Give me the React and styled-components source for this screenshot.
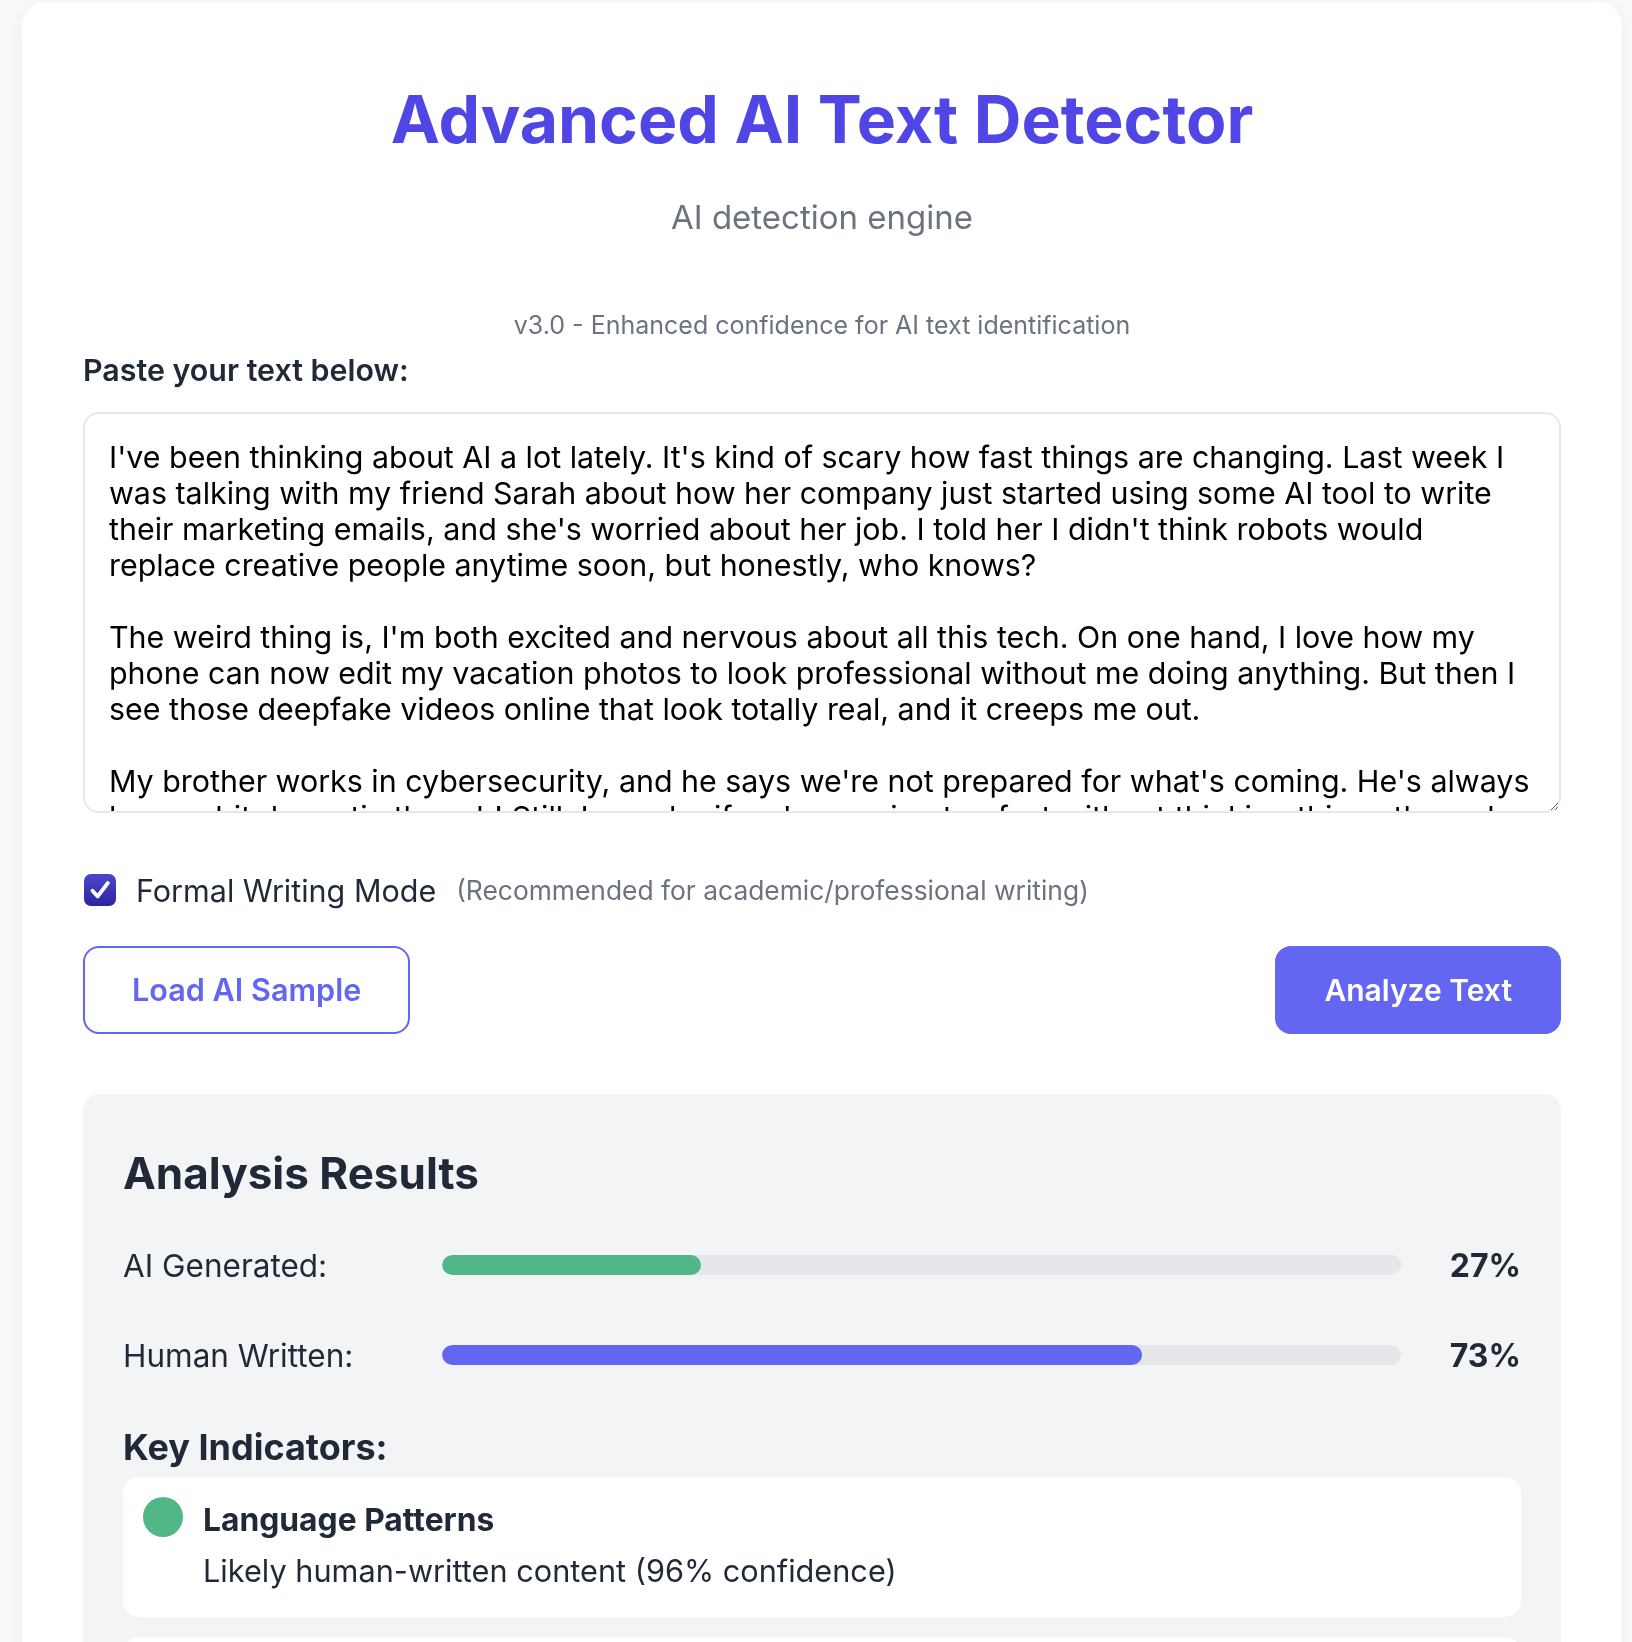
import React, { useState } from 'react';
import styled, { createGlobalStyle } from 'styled-components';

const SAMPLE = `I've been thinking about AI a lot lately. It's kind of scary how fast things are changing. Last week I was talking with my friend Sarah about how her company just started using some AI tool to write their marketing emails, and she's worried about her job. I told her I didn't think robots would replace creative people anytime soon, but honestly, who knows?

The weird thing is, I'm both excited and nervous about all this tech. On one hand, I love how my phone can now edit my vacation photos to look professional without me doing anything. But then I see those deepfake videos online that look totally real, and it creeps me out.

My brother works in cybersecurity, and he says we're not prepared for what's coming. He's always been a bit dramatic though! Still, I wonder if we're moving too fast without thinking things through.`;

const RESULTS = [
  { label: 'AI Generated:', value: 27, color: '#52b788' },
  { label: 'Human Written:', value: 73, color: '#6366f1' },
];

const INDICATORS = [
  { title: 'Language Patterns', text: 'Likely human-written content (96% confidence)', color: '#52b788' },
  { title: 'Sentence Structure', text: 'Natural variation in sentence length', color: '#52b788' },
];

const GlobalStyle = createGlobalStyle`
  * { box-sizing: border-box; }
  body {
    margin: 0;
    background: #f9fafb;
    font-family: Inter, "Noto Sans", sans-serif;
    color: #1f2937;
  }
`;

const Page = styled.div`
  padding: 2px 10px 0 22px;
`;

const Card = styled.main`
  width: 1600px;
  background: #ffffff;
  border-radius: 24px;
  box-shadow: 0 4px 24px rgba(17, 24, 39, 0.06);
  padding: 78px 61px 60px;
`;

const Title = styled.h1`
  margin: 0;
  text-align: center;
  font-size: 66px;
  line-height: 1.2;
  font-weight: 700;
  color: #4f46e5;
`;

const Subtitle = styled.p`
  margin: 39px 0 0;
  text-align: center;
  font-size: 33px;
  line-height: 1.2;
  color: #6b7280;
`;

const Version = styled.p`
  margin: 72px 0 0;
  text-align: center;
  font-size: 25px;
  line-height: 1.2;
  color: #6b7280;
`;

const FieldLabel = styled.label`
  display: block;
  margin-top: 12px;
  font-size: 30.4px;
  line-height: 1.2;
  font-weight: 600;
  color: #1f2937;
`;

const TextArea = styled.textarea`
  display: block;
  width: 100%;
  height: 401px;
  margin-top: 24px;
  padding: 25px 24px 20px;
  border: 2px solid #e5e7eb;
  border-radius: 16px;
  font-family: Inter, "Noto Sans", sans-serif;
  font-size: 30.4px;
  line-height: 36px;
  color: #000000;
  background: #ffffff;
  resize: vertical;
  outline: none;
  scrollbar-width: none;
`;

const OptionRow = styled.label`
  display: flex;
  align-items: center;
  height: 36px;
  margin-top: 59px;
  cursor: pointer;
`;

const HiddenInput = styled.input`
  position: absolute;
  opacity: 0;
  pointer-events: none;
`;

const CheckBox = styled.span`
  width: 32px;
  height: 32px;
  margin-left: 1px;
  border-radius: 7px;
  display: flex;
  align-items: center;
  justify-content: center;
  background: ${(p) => (p.checked ? 'linear-gradient(#4c46cc, #2c259f)' : '#ffffff')};
  border: ${(p) => (p.checked ? 'none' : '2px solid #9ca3af')};
`;

const OptionText = styled.span`
  margin-left: 20px;
  font-size: 30.5px;
  color: #1f2937;
`;

const OptionHint = styled.span`
  margin-left: 20px;
  font-size: 26.4px;
  color: #6b7280;
`;

const ButtonRow = styled.div`
  display: flex;
  justify-content: space-between;
  margin-top: 38px;
`;

const Button = styled.button`
  padding: 24px 47px;
  border-radius: 16px;
  border: 2px solid #6366f1;
  font-family: Inter, "Noto Sans", sans-serif;
  font-size: ${(p) => (p.primary ? '30px' : '30.6px')};
  line-height: 36px;
  font-weight: 600;
  cursor: pointer;
  background: ${(p) => (p.primary ? '#6366f1' : '#ffffff')};
  color: ${(p) => (p.primary ? '#ffffff' : '#6366f1')};
`;

const Results = styled.section`
  margin-top: 60px;
  background: #f3f4f6;
  border-radius: 16px;
  padding: 40px;
`;

const ResultsTitle = styled.h2`
  margin: 13px 0 46px;
  font-size: 44px;
  line-height: 1.2;
  font-weight: 700;
  color: #1f2937;
`;

const MeterRow = styled.div`
  display: flex;
  align-items: center;
  gap: 20px;
  height: 38px;
  margin-bottom: 52px;
`;

const MeterLabel = styled.span`
  width: 299px;
  flex-shrink: 0;
  font-size: 31.5px;
  color: #1f2937;
`;

const Track = styled.div`
  flex: 1;
  height: 20px;
  border-radius: 10px;
  background: #e5e7eb;
  overflow: hidden;
`;

const Fill = styled.div`
  height: 100%;
  border-radius: 10px;
  background: ${(p) => p.color};
`;

const Percent = styled.span`
  width: 100px;
  flex-shrink: 0;
  text-align: right;
  font-size: 32px;
  font-weight: 700;
  color: #1f2937;
`;

const KeyTitle = styled.h3`
  margin: 4px 0 8px;
  font-size: 36px;
  line-height: 1.2;
  font-weight: 700;
  color: #1f2937;
`;

const IndicatorList = styled.div`
  display: flex;
  flex-direction: column;
  gap: 20px;
`;

const Indicator = styled.div`
  display: flex;
  align-items: flex-start;
  gap: 20px;
  background: #ffffff;
  border-radius: 16px;
  padding: 20px 20px 24px;
`;

const Dot = styled.span`
  width: 40px;
  height: 40px;
  border-radius: 50%;
  flex-shrink: 0;
  background: ${(p) => p.color};
`;

const IndicatorBody = styled.div`
  display: flex;
  flex-direction: column;
  gap: 6px;
`;

const IndicatorTitle = styled.span`
  font-size: 31.8px;
  line-height: 45px;
  font-weight: 700;
  color: #1f2937;
`;

const IndicatorText = styled.span`
  font-size: 30.7px;
  line-height: 45px;
  color: #1f2937;
`;

const CheckIcon = () => (
  <svg width="24" height="24" viewBox="0 0 24 24" fill="none">
    <path d="M4.5 12.8l5.2 5.6L19.8 5" stroke="#ffffff" strokeWidth="3.8" strokeLinecap="round" strokeLinejoin="round" />
  </svg>
);

const App = () => {
  const [text, setText] = useState(SAMPLE);
  const [formal, setFormal] = useState(true);

  return (
    <Page>
      <GlobalStyle />
      <Card>
        <Title>Advanced AI Text Detector</Title>
        <Subtitle>AI detection engine</Subtitle>
        <Version>v3.0 - Enhanced confidence for AI text identification</Version>
        <FieldLabel htmlFor="input-text">Paste your text below:</FieldLabel>
        <TextArea id="input-text" value={text} onChange={(e) => setText(e.target.value)} />

        <OptionRow>
          <HiddenInput type="checkbox" checked={formal} onChange={() => setFormal(!formal)} />
          <CheckBox checked={formal}>{formal && <CheckIcon />}</CheckBox>
          <OptionText>Formal Writing Mode</OptionText>
          <OptionHint>(Recommended for academic/professional writing)</OptionHint>
        </OptionRow>

        <ButtonRow>
          <Button>Load AI Sample</Button>
          <Button primary>Analyze Text</Button>
        </ButtonRow>

        <Results>
          <ResultsTitle>Analysis Results</ResultsTitle>
          {RESULTS.map((r) => (
            <MeterRow key={r.label}>
              <MeterLabel>{r.label}</MeterLabel>
              <Track>
                <Fill color={r.color} style={{ width: `${r.value}%` }} />
              </Track>
              <Percent>{r.value}%</Percent>
            </MeterRow>
          ))}
          <KeyTitle>Key Indicators:</KeyTitle>
          <IndicatorList>
            {INDICATORS.map((ind) => (
              <Indicator key={ind.title}>
                <Dot color={ind.color} />
                <IndicatorBody>
                  <IndicatorTitle>{ind.title}</IndicatorTitle>
                  <IndicatorText>{ind.text}</IndicatorText>
                </IndicatorBody>
              </Indicator>
            ))}
          </IndicatorList>
        </Results>
      </Card>
    </Page>
  );
};

export default App;
